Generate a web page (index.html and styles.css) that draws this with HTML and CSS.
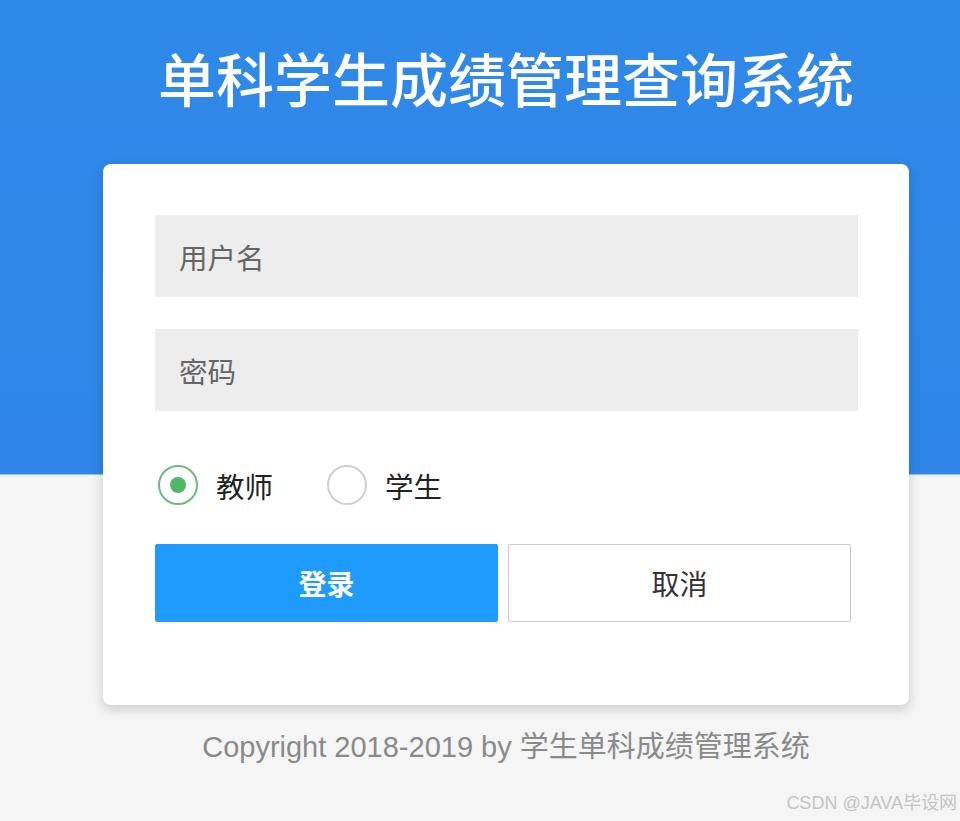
FILE: index.html
```html
<!DOCTYPE html>
<html lang="zh-CN">
<head>
<meta charset="utf-8">
<title>单科学生成绩管理查询系统</title>
<link rel="stylesheet" href="styles.css">
</head>
<body>
<div class="page">
  <h1 class="title">单科学生成绩管理查询系统</h1>
  <div class="card">
    <div class="field"><span class="placeholder">用户名</span></div>
    <div class="field"><span class="placeholder">密码</span></div>
    <div class="roles">
      <label class="role"><span class="radio checked"></span><span class="role-text">教师</span></label>
      <label class="role"><span class="radio"></span><span class="role-text">学生</span></label>
    </div>
    <div class="actions">
      <button class="btn btn-primary">登录</button>
      <button class="btn btn-default">取消</button>
    </div>
  </div>
  <p class="footer">Copyright 2018-2019 by 学生单科成绩管理系统</p>
</div>
<div class="watermark">CSDN @JAVA毕设网</div>
</body>
</html>
```
FILE: styles.css
```css
html, body {
  margin: 0;
  padding: 0;
}
body {
  height: 821px;
  overflow: hidden;
  background: linear-gradient(to bottom, #2f89e9 0, #2f86e8 474px, #f5f5f5 475px, #f5f5f5 100%);
  font-family: "Liberation Sans", "Noto Sans CJK SC", sans-serif;
  position: relative;
}
.page {
  width: 806px;
  margin-left: 103px;
  display: flex;
  flex-direction: column;
}
.title {
  margin: 0;
  padding-top: 48px;
  height: 164px;
  box-sizing: border-box;
  text-align: center;
  color: #ffffff;
  font-size: 58px;
  line-height: 58px;
  font-weight: 500;
  font-family: "Noto Sans CJK SC", sans-serif;
}
.card {
  background: #ffffff;
  border-radius: 8px;
  box-shadow: 0 4px 12px rgba(0, 0, 0, 0.18);
  padding: 51px 51px 83px 52px;
  height: 541px;
  box-sizing: border-box;
  display: flex;
  flex-direction: column;
}
.field {
  height: 82px;
  flex: none;
  background: #ededed;
  display: flex;
  align-items: center;
  padding-left: 24px;
  margin-bottom: 32px;
}
.placeholder {
  font-family: "Noto Sans CJK SC", sans-serif;
  font-size: 28.5px;
  color: #666666;
}
.roles {
  display: flex;
  align-items: center;
  gap: 54px;
  height: 78px;
  flex: none;
  margin-top: 3px;
  padding-left: 3px;
}
.role {
  display: flex;
  align-items: center;
  gap: 18px;
}
.radio {
  width: 40px;
  height: 40px;
  box-sizing: border-box;
  border: 2px solid #cfcfcf;
  border-radius: 50%;
  display: flex;
  align-items: center;
  justify-content: center;
}
.radio.checked {
  border-color: #6fb882;
}
.radio.checked::after {
  content: "";
  width: 16px;
  height: 16px;
  border-radius: 50%;
  background: #4fb868;
}
.role-text {
  font-family: "Noto Sans CJK SC", sans-serif;
  font-size: 28.5px;
  color: #222222;
}
.actions {
  display: flex;
  gap: 10px;
  margin-top: 20px;
}
.btn {
  width: 343px;
  height: 78px;
  font-family: "Noto Sans CJK SC", sans-serif;
  font-size: 28px;
  border-radius: 2px;
  padding: 0;
  cursor: pointer;
}
.btn-primary {
  background: #1e9bfd;
  border: none;
  color: #ffffff;
  font-weight: 700;
}
.btn-default {
  background: #ffffff;
  border: 1px solid #cccccc;
  color: #333333;
}
.footer {
  margin: 22px 0 0 0;
  text-align: center;
  font-size: 29px;
  color: #8a8a8a;
  line-height: 40px;
}
.watermark {
  position: absolute;
  right: 3px;
  bottom: 7px;
  font-family: "Liberation Sans", "Noto Sans CJK SC", sans-serif;
  font-size: 18px;
  color: #c4c4c4;
}
```
